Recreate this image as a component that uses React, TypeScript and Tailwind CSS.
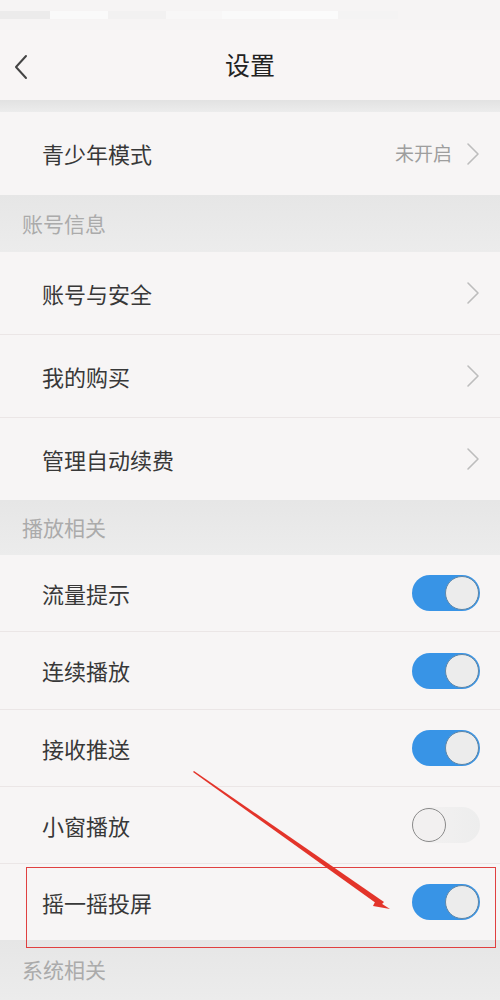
import React from "react";

const font = { fontFamily: '"Noto Sans CJK SC", "Noto Sans", sans-serif' };

function Chevron() {
  return (
    <svg width="14" height="24" viewBox="0 0 14 24" className="ml-[14px]">
      <path d="M2 2 L12 12 L2 22" fill="none" stroke="#bdbdbd" strokeWidth="1.6" strokeLinecap="round" strokeLinejoin="round" />
    </svg>
  );
}

function Toggle({ on }: { on: boolean }) {
  if (on) {
    return (
      <div className="w-[68px] h-[36px] rounded-full bg-[#3894e6] relative shrink-0">
        <div className="absolute right-[1px] top-[1px] w-[34px] h-[34px] rounded-full bg-[#ececec] border-[1.5px] border-[#5f87a8]" />
      </div>
    );
  }
  return (
    <div className="w-[68px] h-[36px] rounded-full bg-gradient-to-r from-[#f4f2f2] to-[#ededed] relative shrink-0">
      <div className="absolute left-0 top-[1px] w-[34px] h-[34px] rounded-full bg-[#f2f0f0] border-[1.5px] border-[#8a8a8a]" />
    </div>
  );
}

function Row({ label, h, right, divider = true }: { label: string; h: string; right: React.ReactNode; divider?: boolean }) {
  return (
    <div className={`${h} flex items-center pl-[42px] pr-[20px] bg-[#f7f5f5] ${divider ? "border-b border-[#ebe6e6]" : ""}`}>
      <span className="text-[22px] text-[#383838] flex-1">{label}</span>
      {right}
    </div>
  );
}

function Section({ label, h }: { label: string; h: string }) {
  return (
    <div className={`${h} flex items-center pl-[22px] bg-gradient-to-b from-[#e6e6e6] to-[#ececec]`}>
      <span className="text-[21px] text-[#ababab]">{label}</span>
    </div>
  );
}

export default function App() {
  return (
    <div className="w-[500px] h-[1000px] overflow-hidden relative bg-[#f7f5f5]" style={font}>
      {/* status bar */}
      <div className="h-[30px] bg-[#f6f4f4] flex items-center">
        <div className="h-[8px] w-full flex">
          <div className="w-[50px] bg-[#ecebeb]" />
          <div className="w-[58px] bg-[#fafafa]" />
          <div className="w-[58px] bg-[#f2f1f1]" />
          <div className="w-[56px] bg-[#f8f7f7]" />
          <div className="w-[58px] bg-[#fafafa]" />
          <div className="w-[58px] bg-[#fbfbfb]" />
          <div className="w-[60px] bg-[#f4f3f3]" />
        </div>
      </div>
      {/* header */}
      <div className="h-[70px] bg-[#f8f5f5] relative flex items-center justify-center">
        <svg width="16" height="26" viewBox="0 0 16 26" className="absolute left-[13px] top-[24px]">
          <path d="M13 2 L3 13 L13 24" fill="none" stroke="#444" strokeWidth="2" strokeLinecap="round" strokeLinejoin="round" />
        </svg>
        <span className="text-[25px] text-[#222]">设置</span>
      </div>
      <div className="h-[12px] bg-gradient-to-b from-[#e2e2e2] to-[#ececec]" />
      <Row
        label="青少年模式"
        h="h-[83px]"
        divider={false}
        right={
          <div className="flex items-center">
            <span className="text-[19px] text-[#9e9e9e]">未开启</span>
            <Chevron />
          </div>
        }
      />
      <Section label="账号信息" h="h-[57px]" />
      <Row label="账号与安全" h="h-[83px]" right={<Chevron />} />
      <Row label="我的购买" h="h-[83px]" right={<Chevron />} />
      <Row label="管理自动续费" h="h-[82px]" divider={false} right={<Chevron />} />
      <Section label="播放相关" h="h-[55px]" />
      <Row label="流量提示" h="h-[77px]" right={<Toggle on />} />
      <Row label="连续播放" h="h-[78px]" right={<Toggle on />} />
      <Row label="接收推送" h="h-[77px]" right={<Toggle on />} />
      <Row label="小窗播放" h="h-[77px]" right={<Toggle on={false} />} />
      <Row label="摇一摇投屏" h="h-[76px]" divider={false} right={<Toggle on />} />
      <Section label="系统相关" h="h-[60px]" />

      {/* annotation box */}
      <div className="absolute left-[26px] top-[867px] w-[470px] h-[81px] border-[1.5px] border-[#e04040]" />
      {/* annotation arrow */}
      <svg className="absolute left-0 top-0" width="500" height="1000" viewBox="0 0 500 1000">
        <polygon points="193,772 194,771 384,902 380,906" fill="#e3342a" />
        <polygon points="376,900 390,909 373,906" fill="#e3342a" />
      </svg>
    </div>
  );
}
